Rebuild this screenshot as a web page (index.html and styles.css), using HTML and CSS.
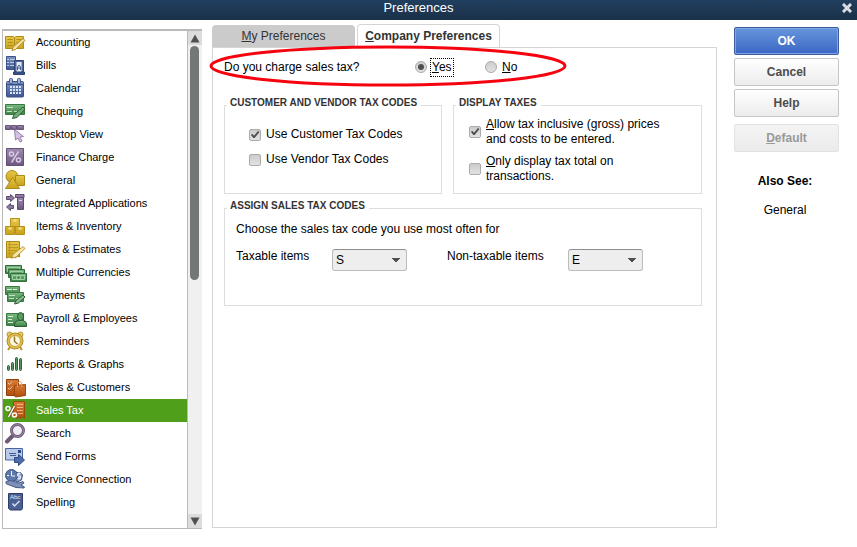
FILE: index.html
```html
<!DOCTYPE html>
<html lang="en">
<head>
<meta charset="utf-8">
<title>Preferences</title>
<link rel="stylesheet" href="styles.css">
</head>
<body>
<svg class="defs" width="0" height="0" aria-hidden="true">
  <defs>
    <linearGradient id="gold" x1="0" y1="0" x2="0" y2="1"><stop offset="0" stop-color="#e6c748"/><stop offset="1" stop-color="#c8a21c"/></linearGradient>
    <linearGradient id="blue" x1="0" y1="0" x2="0" y2="1"><stop offset="0" stop-color="#7d95c4"/><stop offset="1" stop-color="#3c5690"/></linearGradient>
    <linearGradient id="green" x1="0" y1="0" x2="0" y2="1"><stop offset="0" stop-color="#7ab87e"/><stop offset="1" stop-color="#3d8048"/></linearGradient>
    <linearGradient id="purple" x1="0" y1="0" x2="0" y2="1"><stop offset="0" stop-color="#a08bb0"/><stop offset="1" stop-color="#6c577f"/></linearGradient>
    <linearGradient id="orange" x1="0" y1="0" x2="0" y2="1"><stop offset="0" stop-color="#d67a38"/><stop offset="1" stop-color="#b34e0c"/></linearGradient>
  </defs>
</svg>

<header class="titlebar">
  <h1>Preferences</h1>
  <button class="close" type="button" aria-label="Close">
    <svg width="10" height="10" viewBox="0 0 10 10"><path d="M2 2l6 6M8 2l-6 6" stroke="#d9dde2" stroke-width="3" stroke-linecap="square"/></svg>
  </button>
</header>

<main class="window">
  <nav class="sidebar" aria-label="Categories">
    <ul class="categories">
      <li><button type="button"><svg viewBox="0 0 22 22"><path d="M.5 4.500h8l1 1 1-1h8v12h-8l-1 1-1-1h-8z" fill="url(#gold)" stroke="#b08d17"/><path d="M9.500 5v12M2.500 7.500h5M2.500 10.500h5M2.500 13.500h5M11.500 7.500h5M11.500 10.500h3" stroke="#b08d17"/><path d="M7 18.500l1-3.500 10-8.500 2 2-9.500 9z" fill="#f4dfa0" stroke="#b18b28"/></svg>Accounting</button></li>
      <li><button type="button"><svg viewBox="0 0 22 22"><path d="M1.500 1.500h9v13h-9z" fill="url(#blue)" stroke="#3b5388"/><path d="M2 4.500h2M5 4.500h5M2 7.500h2M5 7.500h5M2 10.500h2M5 10.500h5" stroke="#b9c7e2"/><path d="M9.500 5.500h9v11h-9z" fill="#52699c" stroke="#2f4474"/><path d="M11.500 7h5v10h-5z" fill="#e4eaf6"/><path d="M12.500 15v-3l1.500-2 1.500 2v3M12.500 13h3" fill="none" stroke="#40588f"/><path d="M8.500 17h11v2.500h-11z" fill="#3b5388" stroke="#2f4474"/></svg>Bills</button></li>
      <li><button type="button"><svg viewBox="0 0 22 22"><rect x="1.500" y="3.500" width="17" height="15.500" rx="1" fill="url(#blue)" stroke="#3a5288"/><path d="M2 6.500h16" stroke="#3a5288"/><path d="M5 9h11M5 12h11M5 15h11" stroke="#dbe4f5" stroke-width="2" stroke-dasharray="2 1"/><rect x="4.500" y=".5" width="3" height="5" rx="1" fill="#a4b4d3" stroke="#40558a"/><rect x="12.500" y=".5" width="3" height="5" rx="1" fill="#a4b4d3" stroke="#40558a"/></svg>Calendar</button></li>
      <li><button type="button"><svg viewBox="0 0 22 22"><path d="M.5 3.500h19v10h-19z" fill="url(#green)" stroke="#3b7a43"/><path d="M2 6.500h6M2 10.500h5M9 10.500h5" stroke="#c4e2c4"/><path d="M7.500 17.500l1.500-4 9-7.500 2 2-8 8.500z" fill="#70aa76" stroke="#2d6236"/></svg>Chequing</button></li>
      <li><button type="button"><svg viewBox="0 0 22 22"><path d="M.5 1.500h5v4h-5zM6.500 1.500h5v4h-5zM12.500 1.500h6v4h-6z" fill="url(#purple)" stroke="#69557b"/><path d="M9.500 5.500l9 7-3.500.5 2 4-2 1-2-4-2.500 2z" fill="#d7c3e5" stroke="#967fad"/></svg>Desktop View</button></li>
      <li><button type="button"><svg viewBox="0 0 22 22"><path d="M1.500 1.500h17v17h-17z" fill="url(#purple)" stroke="#654f79"/><path d="M13.500 4.500l-7 11" stroke="#d9c8e6" stroke-width="1.500"/><circle cx="6.500" cy="7" r="2" fill="none" stroke="#d9c8e6" stroke-width="1.500"/><circle cx="13.500" cy="13" r="2" fill="none" stroke="#d9c8e6" stroke-width="1.500"/></svg>Finance Charge</button></li>
      <li><button type="button"><svg viewBox="0 0 22 22"><circle cx="7" cy="6.500" r="6" fill="url(#gold)" stroke="#ae8b17"/><path d="M10.500 5.500h9v10h-9z" fill="url(#gold)" stroke="#ae8b17"/><path d="M7.500 7.500l7 11h-14z" fill="url(#gold)" stroke="#ae8b17"/></svg>General</button></li>
      <li><button type="button"><svg viewBox="0 0 22 22"><path d="M1.500 3.500h4v-2l4 3.500-4 3.500v-2h-4z" fill="#8d7b9c" stroke="#5e4c70"/><path d="M8.500 12.500h-3v-2l-4 3.500 4 3.500v-2h3z" fill="#8d7b9c" stroke="#5e4c70"/><path d="M12.500 4.500h6v12h-6z" fill="url(#purple)" stroke="#5f4b72"/><path d="M10.500 1.500h8.500v3h-8.500z" fill="#8f7ba0" stroke="#5f4b72"/><path d="M14 7.500h3" stroke="#ded0e9"/></svg>Integrated Applications</button></li>
      <li><button type="button"><svg viewBox="0 0 22 22"><path d="M5.500 2.500h9v8h-9zM.5 10.500h9v8h-9zM10.500 10.500h9v8h-9z" fill="url(#gold)" stroke="#b69018"/><path d="M8.500 3.500h3v2h-3zM3.500 11.500h3v2h-3zM13.500 11.500h3v2h-3z" fill="#f5e391"/></svg>Items &amp; Inventory</button></li>
      <li><button type="button"><svg viewBox="0 0 22 22"><path d="M1.500 2.500h13v15.500l-2-1-2 2-2-1.500-2 1.500-2.500-1-2.500 1z" fill="url(#gold)" stroke="#ac8614"/><path d="M3 5.500h10M3 8.500h10M3 11.500h10M3 14.500h5M4.500 3v14" stroke="#bd981f"/><path d="M7 19l1-3.500 10-8 2 2-9 8.500z" fill="#f8e7ab" stroke="#bc973a"/></svg>Jobs &amp; Estimates</button></li>
      <li><button type="button"><svg viewBox="0 0 22 22"><path d="M.5 3.500h16v8h-16z" fill="url(#green)" stroke="#326e3b"/><path d="M2.500 5.500h12v4h-12z" fill="none" stroke="#9fd0a1"/><path d="M3.500 7.500h16v8h-16z" fill="url(#green)" stroke="#326e3b"/><path d="M5.500 9.500h12v4h-12z" fill="none" stroke="#9fd0a1"/><path d="M5.500 11.500h16v8h-16z" fill="url(#green)" stroke="#326e3b"/><path d="M7.500 13.500h12v4h-12z" fill="none" stroke="#9fd0a1"/><circle cx="13.500" cy="15.500" r="2" fill="#4b8d54" stroke="#b5dab5"/></svg>Multiple Currencies</button></li>
      <li><button type="button"><svg viewBox="0 0 22 22"><path d="M.5 1.500h14v8h-14z" fill="url(#green)" stroke="#397941"/><path d="M2 4.500h5M8 4.500h4" stroke="#e0f1df"/><path d="M2.500 7.500h16v9h-16z" fill="url(#green)" stroke="#397941"/><path d="M4 10.500h6M4 13.500h5M11 13.500h3" stroke="#c4e2c4"/><path d="M9.500 19l1.500-3.500 7-5.500 2 2-6.500 6z" fill="#86b98b" stroke="#2d6236"/></svg>Payments</button></li>
      <li><button type="button"><svg viewBox="0 0 22 22"><path d="M1.500 5.500h17v12h-17z" fill="url(#green)" stroke="#397941"/><path d="M3 8.500h5M3 11.500h4M3 14.500h5" stroke="#d7ecd6"/><path d="M9.500 18.500v-2.500q0-3 4-3.500h4q4 .5 4 3.500v2.500z" fill="url(#green)" stroke="#255d30"/><ellipse cx="15.500" cy="8.500" rx="3" ry="4" fill="#5a9b62" stroke="#255d30"/></svg>Payroll &amp; Employees</button></li>
      <li><button type="button"><svg viewBox="0 0 22 22"><path d="M5 16l-2 3M15 16l2 3" stroke="#ba942e" stroke-width="2"/><circle cx="4.500" cy="3.500" r="2.500" fill="#e8cc69" stroke="#ba942e"/><circle cx="15.500" cy="3.500" r="2.500" fill="#e8cc69" stroke="#ba942e"/><circle cx="10" cy="10" r="8" fill="#dfbd4c" stroke="#b08a25"/><circle cx="10" cy="10" r="5.500" fill="#fff9e2" stroke="#c7a338"/><path d="M9.500 5.500v5l3 2.500" fill="none" stroke="#8d7230" stroke-width="1.500"/></svg>Reminders</button></li>
      <li><button type="button"><svg viewBox="0 0 22 22"><rect x="2.500" y="11.500" width="2" height="5" rx="1" fill="#5b9462" stroke="#2d6237"/><rect x="6.500" y="8.500" width="2" height="8" rx="1" fill="#5b9462" stroke="#2d6237"/><rect x="10.500" y="3.500" width="2" height="13" rx="1" fill="#5b9462" stroke="#2d6237"/><rect x="14.500" y="4.500" width="2" height="12" rx="1" fill="#5b9462" stroke="#2d6237"/></svg>Reports &amp; Graphs</button></li>
      <li><button type="button"><svg viewBox="0 0 22 22"><path d="M1.500 2.500h12v16h-12z" fill="url(#orange)" stroke="#92400b"/><path d="M3 6l1.500 1.500L7 4.500M3 11l1.500 1.500L7 9.500" fill="none" stroke="#f3c6a4"/><path d="M9.500 8.500l11-1v11l-10 1.500-1-1z" fill="url(#orange)" stroke="#9e460a"/><path d="M12.500 10v-3.500q2.500-4 4 0V10" fill="none" stroke="#e09a66"/></svg>Sales &amp; Customers</button></li>
      <li><button class="selected" type="button" aria-current="page"><svg viewBox="0 0 22 22"><path d="M8.500 1.500h11v17l-2-1.500-2 1.500-2-1.500-2 1.500-3-1.500z" fill="url(#orange)" stroke="#9c480c"/><path d="M12 4.500h6M12 7.500h6M12 10.500h6M13 13.500h5" stroke="#eeb287"/><path d="M9.500 6l-6 11" stroke="#7c4a18" stroke-width="3"/><path d="M9.500 6l-6 11" stroke="#fff" stroke-width="1.500"/><circle cx="3" cy="8.500" r="2" fill="none" stroke="#fff" stroke-width="1.500"/><circle cx="9.500" cy="15" r="2" fill="#b9551a" stroke="#fff" stroke-width="1.500"/></svg>Sales Tax</button></li>
      <li><button type="button"><svg viewBox="0 0 22 22"><path d="M7.500 13l-5.500 5.500" stroke="#6d5b78" stroke-width="4" stroke-linecap="round"/><circle cx="12.500" cy="7.500" r="6" fill="#f1edf6" stroke="#6f5c7b" stroke-width="3"/><circle cx="12.500" cy="7.500" r="6" fill="none" stroke="#9c8ba6"/></svg>Search</button></li>
      <li><button type="button"><svg viewBox="0 0 22 22"><path d="M.5 2.500h17v11.500h-17z" fill="#b9c9e8" stroke="#4a64a0"/><path d="M4 7.500h7M5 9.500h6" stroke="#435c95"/><path d="M13 4h3v3h-3z" fill="#2d477f"/><path d="M9.500 11.500h4v-3l6 5.500-6 5.500v-3h-4z" fill="#4f6ca9" stroke="#2f4a85"/></svg>Send Forms</button></li>
      <li><button type="button"><svg viewBox="0 0 22 22"><path d="M10 3.500h5.500l2 2.500-1 5-4 2-5-3z" fill="#8296bb" stroke="#435a8b"/><circle cx="6.500" cy="6.500" r="6" fill="#5f78aa" stroke="#3e5486"/><path d="M6.500 2v5H10M2 6.500h2" fill="none" stroke="#f2f5fb"/><path d="M15.500 4.500h-3v2.500h3v2.500h-3M14 3v8" fill="none" stroke="#e4ebf7"/><path d="M1 12.500q5-2 8 0l5 1.500 4-1.500 1 1.500-3 2 3.500 2-.5 1-8-.5-8-3-2-1z" fill="#7c90b8" stroke="#455a8b"/></svg>Service Connection</button></li>
      <li><button type="button"><svg viewBox="0 0 22 22"><path d="M3.500 1.500h14v15l-1 1.500h-11l-2-1.500z" fill="#4b5f90" stroke="#2c3e6c"/><text class="glyph" x="5" y="7">Abc</text><path d="M7.500 11.500l2 2.500 5-5" fill="none" stroke="#d7e0f2" stroke-width="1.500"/></svg>Spelling</button></li>
    </ul>
    <div class="scrollbar" aria-hidden="true">
      <span class="arrow"><svg width="10" height="9" viewBox="0 0 10 9"><path d="M5 .5L9.500 8.500h-9z" fill="#505050"/></svg></span>
      <span class="track"><span class="thumb"></span></span>
      <span class="arrow"><svg width="10" height="9" viewBox="0 0 10 9"><path d="M5 8.500L.5.500h9z" fill="#505050"/></svg></span>
    </div>
  </nav>

  <section class="content">
    <div class="tabs" role="tablist">
      <button class="tab" type="button" role="tab" aria-selected="false"><span><u>M</u>y Preferences</span></button>
      <button class="tab active" type="button" role="tab" aria-selected="true"><span><u>C</u>ompany Preferences</span></button>
    </div>
    <form class="panel" id="preferences">
      <div class="question" role="radiogroup" aria-labelledby="question-text">
        <span class="question-text" id="question-text">Do you charge sales tax?</span>
        <label class="choice"><input type="radio" name="charge" checked><span class="focused"><u>Y</u>es</span></label>
        <label class="choice"><input type="radio" name="charge"><span><u>N</u>o</span></label>
        <svg class="highlight" viewBox="0 0 358 42"><ellipse cx="179" cy="21" rx="177" ry="19" fill="none" stroke="#f5040f" stroke-width="3"/></svg>
      </div>
      <div class="groups">
        <fieldset class="group codes">
          <legend>CUSTOMER AND VENDOR TAX CODES</legend>
          <label class="check"><input type="checkbox" checked><span>Use Customer Tax Codes</span></label>
          <label class="check"><input type="checkbox"><span>Use Vendor Tax Codes</span></label>
        </fieldset>
        <fieldset class="group display">
          <legend>DISPLAY TAXES</legend>
          <label class="check"><input type="checkbox" checked><span><u>A</u>llow tax inclusive (gross) prices<br>and costs to be entered.</span></label>
          <label class="check"><input type="checkbox"><span><u>O</u>nly display tax total on<br>transactions.</span></label>
        </fieldset>
        <fieldset class="group assign">
          <legend>ASSIGN SALES TAX CODES</legend>
          <p>Choose the sales tax code you use most often for</p>
          <div class="selects">
            <label for="taxable">Taxable items</label>
            <select id="taxable"><option>S</option><option>E</option></select>
            <label for="nontaxable">Non-taxable items</label>
            <select id="nontaxable"><option>E</option><option>S</option></select>
          </div>
        </fieldset>
      </div>
    </form>
  </section>

  <aside class="actions">
    <button class="action primary" type="submit" form="preferences">OK</button>
    <button class="action" type="button">Cancel</button>
    <button class="action" type="button">Help</button>
    <button class="action default" type="button" disabled><span><u>D</u>efault</span></button>
    <h2>Also See:</h2>
    <a href="#general">General</a>
  </aside>
</main>
</body>
</html>
```
FILE: styles.css
```css
* { box-sizing: border-box; }

body {
  margin: 0;
  min-height: 100vh;
  display: flex;
  flex-direction: column;
  background: #fff;
  color: #000;
  font: 12px/15px "Liberation Sans", Arial, sans-serif;
}

button, input, select { font: inherit; color: inherit; margin: 0; }
button { padding: 0; border: 0; background: none; }
.defs { position: absolute; }

.titlebar {
  display: grid;
  grid-template-columns: 1fr 20px;
  align-items: center;
  height: 20px;
  padding-bottom: 5px;
  background: linear-gradient(#213f5f, #1a3048);
}
.titlebar h1 {
  margin: 0;
  color: #fff;
  font-size: 13px;
  font-weight: normal;
  line-height: 15px;
  text-align: center;
}
.close { display: grid; place-items: center; }

.window {
  flex: 1;
  display: grid;
  grid-template-columns: 200px 1fr 105px;
  padding: 0 18px 18px 2px;
}

.sidebar {
  display: grid;
  grid-template-columns: 1fr 14px;
  margin-top: 9px;
  border: 1px solid #bababa;
  border-width: 2px 0 1px 1px;
}
.categories {
  margin: 0;
  padding: 0;
  border-right: 1px solid #bababa;
  list-style: none;
  font-size: 11px;
}
.categories button {
  display: flex;
  align-items: center;
  gap: 9px;
  width: 100%;
  height: 23px;
  padding-left: 2px;
  text-align: left;
}
.categories svg { width: 22px; height: 22px; flex: none; }
.categories .selected { background: #4f9f1b; color: #fff; }
.glyph { font-size: 6px; fill: #e5ebf6; }

.scrollbar {
  display: flex;
  flex-direction: column;
  background: #f0f0f0;
}
.arrow {
  display: grid;
  place-items: center;
  height: 14px;
  background: #dcdcdc;
}
.track { flex: 1; padding: 1px 3px 0 2px; }
.thumb {
  display: block;
  height: 50%;
  border-radius: 5px;
  background: #727777;
}

.content {
  display: flex;
  flex-direction: column;
  margin: 4px 17px 1px 10px;
}
.tabs { display: flex; align-items: flex-end; gap: 2px; }
.tab {
  width: 143px;
  height: 22px;
  border-radius: 4px 4px 0 0;
  background: #cbcbcb;
  color: #333;
}
.tab.active {
  height: 24px;
  margin-bottom: -1px;
  border: 1px solid #d5d5d5;
  border-bottom: 0;
  background: #fff;
  font-weight: bold;
}
.panel {
  flex: 1;
  padding: 0 14px 0 11px;
  border: 1px solid #d5d5d5;
}

.question {
  position: relative;
  display: flex;
  align-items: center;
  height: 38px;
}
.question-text { width: 191px; }
.choice { display: flex; align-items: center; gap: 5px; width: 70px; }
.focused { outline: 1px dotted #000; outline-offset: 1px; }
.highlight {
  position: absolute;
  left: -15px;
  top: -3px;
  width: 358px;
  height: 42px;
  pointer-events: none;
}

input[type="radio"], input[type="checkbox"] {
  appearance: none;
  display: grid;
  place-items: center;
  flex: none;
  width: 12px;
  height: 12px;
  border: 1px solid #ababab;
  background: linear-gradient(#ccc, #e2e2e2);
}
input[type="radio"] { border-radius: 50%; }
input[type="radio"]:checked::before {
  content: "";
  width: 6px;
  height: 6px;
  border-radius: 50%;
  background: #505050;
}
input[type="checkbox"] { border-radius: 2px; }
input[type="checkbox"]:checked::before {
  content: "";
  width: 10px;
  height: 10px;
  background: #4c4c4c;
  clip-path: polygon(8% 52%, 26% 46%, 40% 62%, 80% 16%, 94% 24%, 46% 86%, 34% 86%);
}

.groups {
  display: grid;
  grid-template-columns: 218fr 249fr;
  column-gap: 11px;
  row-gap: 6px;
  margin-top: 11px;
}
.group {
  min-width: 0;
  margin: 0;
  padding: 0;
  border: 1px solid #dedede;
}
legend {
  margin-left: 2px;
  padding: 0 4px 5px 3px;
  color: #333;
  font-size: 10px;
  font-weight: bold;
  line-height: 11px;
}
.check { display: flex; align-items: center; gap: 5px; }
.codes { height: 97px; }
.codes .check { height: 25px; padding-left: 24px; }
.codes legend + .check { margin-top: 9px; }
.display .check { height: 37px; padding-left: 15px; }

.assign { grid-column: 1 / -1; height: 106px; }
.assign p { margin: 6px 0 0 11px; }
.selects {
  display: grid;
  grid-template-columns: 96px 115px 121px 75px;
  margin: 12px 0 0 11px;
}
.selects select {
  appearance: none;
  width: 75px;
  height: 22px;
  padding: 0 3px;
  border: 1px solid #bcbcbc;
  border-top-color: #8e8e8e;
  border-radius: 3px;
  background:
    linear-gradient(to bottom right, #505050 50%, transparent 51%) 63px 8px / 4px 5px no-repeat,
    linear-gradient(to bottom left, #505050 50%, transparent 51%) 59px 8px / 4px 5px no-repeat,
    #eee;
}

.actions {
  display: flex;
  flex-direction: column;
  gap: 3px;
  padding-top: 7px;
  text-align: center;
}
.action {
  height: 28px;
  border: 1px solid #c6c6c6;
  border-radius: 2px;
  background: linear-gradient(#fff, #ececec);
  color: #4c4c4c;
  font-weight: bold;
}
.primary {
  border-color: #3c5a9c;
  background: linear-gradient(#6696dc, #3c66c4);
  box-shadow: inset 0 0 0 1px #7ea6e4;
  color: #fff;
}
.default {
  margin-top: 4px;
  border-color: #e2e2e2;
  background: linear-gradient(#f4f4f4, #ebebeb);
  color: #999;
}
.actions h2 { margin: 19px 0 11px; font-size: 12px; line-height: 15px; }
.actions a { color: #000; text-decoration: none; }
.actions h2, .actions a { padding-right: 3px; }
```
